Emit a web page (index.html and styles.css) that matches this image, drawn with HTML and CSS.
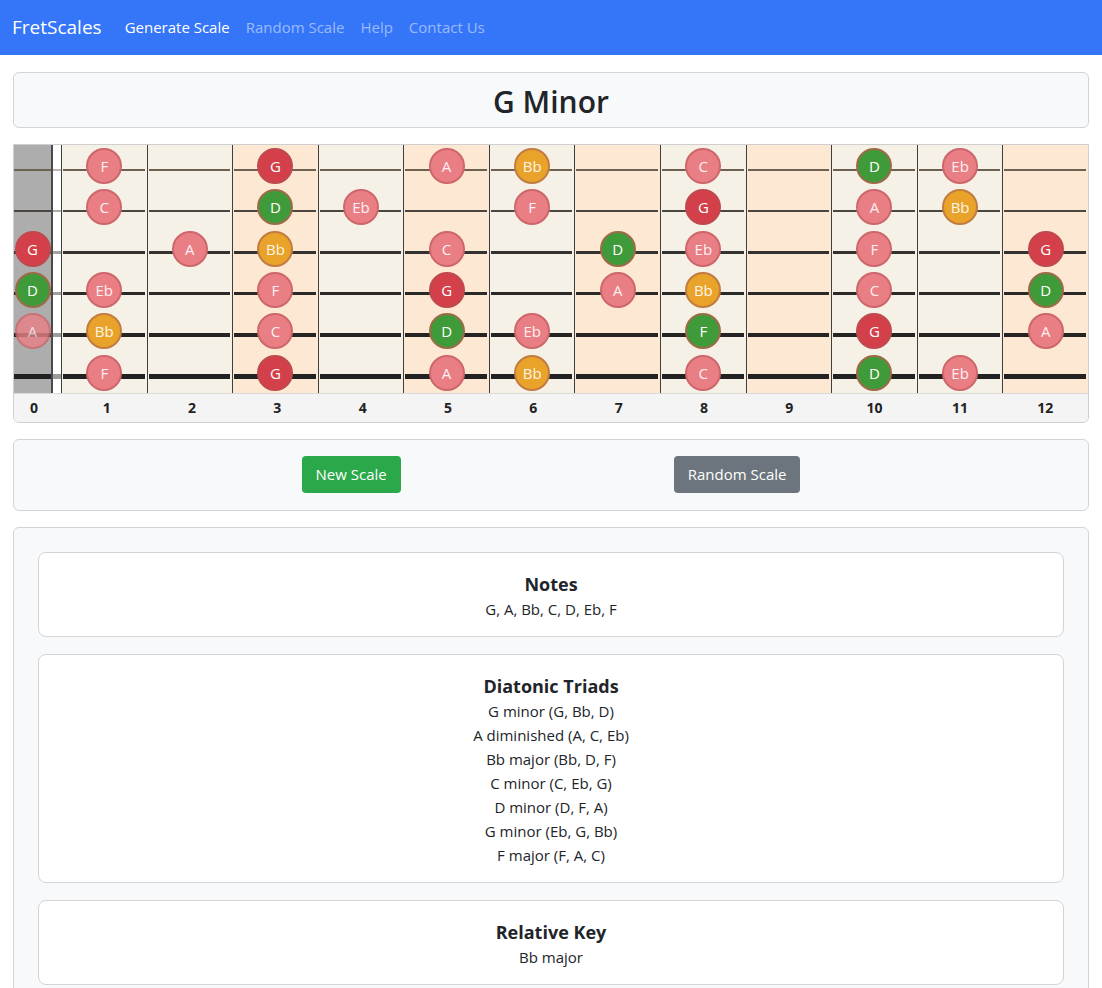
FILE: index.html
```html
<!DOCTYPE html>
<html lang="en">
<head>
<meta charset="utf-8">
<title>FretScales</title>
<link rel="stylesheet" href="styles.css">
</head>
<body>
<nav class="navbar">
  <a class="brand" href="#">FretScales</a>
  <a class="nav-link active" href="#">Generate Scale</a>
  <a class="nav-link" href="#">Random Scale</a>
  <a class="nav-link" href="#">Help</a>
  <a class="nav-link" href="#">Contact Us</a>
</nav>

<main class="page">
  <section class="panel title-panel">
    <h2 class="scale-title">G Minor</h2>
  </section>

  <section class="fretboard">
    <div class="board">
      <div class="string s1">
        <div class="cell nut"></div><div class="cell gap"></div>
        <div class="cell"><span class="note pink">F</span></div>
        <div class="cell"></div>
        <div class="cell mark"><span class="note red">G</span></div>
        <div class="cell"></div>
        <div class="cell mark"><span class="note pink">A</span></div>
        <div class="cell"><span class="note orange">Bb</span></div>
        <div class="cell mark"></div>
        <div class="cell"><span class="note pink">C</span></div>
        <div class="cell mark"></div>
        <div class="cell"><span class="note green">D</span></div>
        <div class="cell"><span class="note pink">Eb</span></div>
        <div class="cell mark last"></div>
      </div>
      <div class="string s2">
        <div class="cell nut"></div><div class="cell gap"></div>
        <div class="cell"><span class="note pink">C</span></div>
        <div class="cell"></div>
        <div class="cell mark"><span class="note green">D</span></div>
        <div class="cell"><span class="note pink">Eb</span></div>
        <div class="cell mark"></div>
        <div class="cell"><span class="note pink">F</span></div>
        <div class="cell mark"></div>
        <div class="cell"><span class="note red">G</span></div>
        <div class="cell mark"></div>
        <div class="cell"><span class="note pink">A</span></div>
        <div class="cell"><span class="note orange">Bb</span></div>
        <div class="cell mark last"></div>
      </div>
      <div class="string s3">
        <div class="cell nut"><span class="note red">G</span></div><div class="cell gap"></div>
        <div class="cell"></div>
        <div class="cell"><span class="note pink">A</span></div>
        <div class="cell mark"><span class="note orange">Bb</span></div>
        <div class="cell"></div>
        <div class="cell mark"><span class="note pink">C</span></div>
        <div class="cell"></div>
        <div class="cell mark"><span class="note green">D</span></div>
        <div class="cell"><span class="note pink">Eb</span></div>
        <div class="cell mark"></div>
        <div class="cell"><span class="note pink">F</span></div>
        <div class="cell"></div>
        <div class="cell mark last"><span class="note red">G</span></div>
      </div>
      <div class="string s4">
        <div class="cell nut"><span class="note green">D</span></div><div class="cell gap"></div>
        <div class="cell"><span class="note pink">Eb</span></div>
        <div class="cell"></div>
        <div class="cell mark"><span class="note pink">F</span></div>
        <div class="cell"></div>
        <div class="cell mark"><span class="note red">G</span></div>
        <div class="cell"></div>
        <div class="cell mark"><span class="note pink">A</span></div>
        <div class="cell"><span class="note orange">Bb</span></div>
        <div class="cell mark"></div>
        <div class="cell"><span class="note pink">C</span></div>
        <div class="cell"></div>
        <div class="cell mark last"><span class="note green">D</span></div>
      </div>
      <div class="string s5">
        <div class="cell nut"><span class="note pink faded">A</span></div><div class="cell gap"></div>
        <div class="cell"><span class="note orange">Bb</span></div>
        <div class="cell"></div>
        <div class="cell mark"><span class="note pink">C</span></div>
        <div class="cell"></div>
        <div class="cell mark"><span class="note green">D</span></div>
        <div class="cell"><span class="note pink">Eb</span></div>
        <div class="cell mark"></div>
        <div class="cell"><span class="note green">F</span></div>
        <div class="cell mark"></div>
        <div class="cell"><span class="note red">G</span></div>
        <div class="cell"></div>
        <div class="cell mark last"><span class="note pink">A</span></div>
      </div>
      <div class="string s6">
        <div class="cell nut"></div><div class="cell gap"></div>
        <div class="cell"><span class="note pink">F</span></div>
        <div class="cell"></div>
        <div class="cell mark"><span class="note red">G</span></div>
        <div class="cell"></div>
        <div class="cell mark"><span class="note pink">A</span></div>
        <div class="cell"><span class="note orange">Bb</span></div>
        <div class="cell mark"></div>
        <div class="cell"><span class="note pink">C</span></div>
        <div class="cell mark"></div>
        <div class="cell"><span class="note green">D</span></div>
        <div class="cell"><span class="note pink">Eb</span></div>
        <div class="cell mark last"></div>
      </div>
    </div>
    <div class="labels">
      <span class="lbl nut-lbl">0</span><span class="lbl gap-lbl"></span>
      <span class="lbl">1</span><span class="lbl">2</span><span class="lbl">3</span>
      <span class="lbl">4</span><span class="lbl">5</span><span class="lbl">6</span>
      <span class="lbl">7</span><span class="lbl">8</span><span class="lbl">9</span>
      <span class="lbl">10</span><span class="lbl">11</span><span class="lbl">12</span>
    </div>
  </section>

  <section class="panel button-panel">
    <button class="btn btn-success" type="button">New Scale</button>
    <button class="btn btn-secondary" type="button">Random Scale</button>
  </section>

  <section class="panel info-panel">
    <div class="info-card">
      <h5 class="info-title">Notes</h5>
      <p class="info-line">G, A, Bb, C, D, Eb, F</p>
    </div>
    <div class="info-card">
      <h5 class="info-title">Diatonic Triads</h5>
      <p class="info-line">G minor (G, Bb, D)</p>
      <p class="info-line">A diminished (A, C, Eb)</p>
      <p class="info-line">Bb major (Bb, D, F)</p>
      <p class="info-line">C minor (C, Eb, G)</p>
      <p class="info-line">D minor (D, F, A)</p>
      <p class="info-line">G minor (Eb, G, Bb)</p>
      <p class="info-line">F major (F, A, C)</p>
    </div>
    <div class="info-card">
      <h5 class="info-title">Relative Key</h5>
      <p class="info-line">Bb major</p>
    </div>
  </section>
</main>
</body>
</html>
```

FILE: styles.css
```css
* { box-sizing: border-box; }

body {
  margin: 0;
  font-family: "Open Sans", "Noto Sans", sans-serif;
  font-size: 15px;
  line-height: 24px;
  color: #212529;
  background: #fff;
}

/* ---------- navbar ---------- */
.navbar {
  height: 55px;
  background: #3575f8;
  display: flex;
  align-items: center;
  padding: 0 12px 1px;
}
.brand {
  color: #fff;
  font-size: 19px;
  text-decoration: none;
  margin-right: 15px;
}
.nav-link {
  color: rgba(255, 255, 255, 0.5);
  text-decoration: none;
  padding: 0 8px;
  font-size: 15px;
}
.nav-link.active { color: #fff; }

/* ---------- layout ---------- */
.page {
  padding: 17px 13px 0;
  display: flex;
  flex-direction: column;
  gap: 16px;
}
.panel {
  background: #f8f9fa;
  border: 1px solid #d2d4d6;
  border-radius: 6px;
}

.title-panel {
  padding: 10px 8px 6px;
  text-align: center;
}
.scale-title {
  margin: 0;
  font-size: 30px;
  line-height: 38px;
  font-weight: 600;
}

/* ---------- fretboard ---------- */
.fretboard {
  border: 1px solid #cfcfcf;
  border-radius: 0 0 6px 6px;
  overflow: hidden;
}
.board {
  height: 248px;
  display: flex;
  flex-direction: column;
}
.string {
  flex: 1;
  display: flex;
  --t: 1px;
  --c: #6b6055;
}
.s1 { --t: 1.5px; --c: #6e6152; }
.s2 { --t: 2px; --c: #4c4641; }
.s3 { --t: 2.5px; --c: #343230; }
.s4 { --t: 3px; --c: #2b2a29; }
.s5 { --t: 4px; --c: #262524; }
.s6 { --t: 5px; --c: #222; }

.cell {
  flex: 1;
  position: relative;
  background: #f6f1e6;
  border-right: 1px solid #3f3f3f;
  display: flex;
  justify-content: center;
  align-items: flex-start;
  padding-top: 3px;
}
.cell::before {
  content: "";
  position: absolute;
  left: 1px;
  right: 2px;
  top: calc(25px - var(--t) / 2);
  height: var(--t);
  background: var(--c);
}
.cell.mark { background: #fde8d4; }
.cell.last { border-right: none; }
.cell.nut {
  flex: 0 0 39px;
  background: #adadad;
  border-right: 2px solid #4a4a4a;
}
.cell.nut::before { left: 0; right: 0; }
.cell.gap {
  flex: 0 0 9px;
  background: #fff;
}
.cell.gap::before { left: 0; right: 0; opacity: 0.45; }

.note {
  position: relative;
  z-index: 1;
  width: 36px;
  height: 36px;
  border-radius: 50%;
  border: 2px solid rgba(175, 95, 70, 0.8);
  color: #fff;
  font-size: 15px;
  line-height: 32px;
  text-align: center;
}
.note.pink { background: #e97f85; border-color: #cd676b; color: #fdf0f0; }
.note.red { background: #d3404a; border-color: #bf4a4e; }
.note.green { background: #3f9b3a; border-color: #9c6b48; }
.note.orange { background: #e9a22a; border-color: #c27c42; color: #fdf6e4; }
.note.faded { opacity: 0.8; }

.labels {
  display: flex;
  height: 29px;
  background: #f4f4f4;
  border-top: 1px solid #dadada;
}
.lbl {
  flex: 1;
  text-align: center;
  font-size: 14px;
  font-weight: 700;
  line-height: 28px;
  color: #222;
}
.lbl.nut-lbl { flex: 0 0 41px; padding-right: 1px; }
.lbl.gap-lbl { flex: 0 0 9px; }

/* ---------- buttons ---------- */
.button-panel {
  display: flex;
  justify-content: center;
  gap: 273px;
  padding: 16px 0 17px;
}
.btn {
  font-family: inherit;
  font-size: 15px;
  line-height: 23px;
  color: #fff;
  border: 1px solid transparent;
  border-radius: 4px;
  padding: 6px 13px;
  cursor: pointer;
}
.btn-success { background: #2aa84a; }
.btn-secondary { background: #6c757d; }

/* ---------- info ---------- */
.info-panel {
  padding: 24px;
  display: flex;
  flex-direction: column;
  gap: 17px;
}
.info-card {
  background: #fff;
  border: 1px solid #d3d4d6;
  border-radius: 8px;
  padding: 19px 16px 15px;
  text-align: center;
}
.info-title {
  margin: 0 0 1px;
  font-size: 18px;
  line-height: 24px;
  font-weight: 700;
}
.info-line {
  margin: 0;
  font-size: 15px;
  line-height: 24px;
}
```
